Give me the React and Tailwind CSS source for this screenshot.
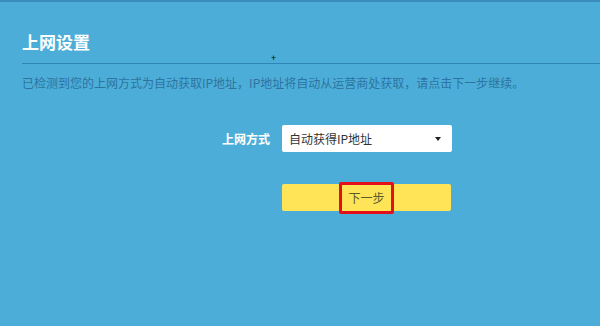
import React from "react";

const NetSetup = () => {
  return (
    <div
      className="w-full h-[326px] bg-[#4caed8] border-t-2 border-[#3a8dbb] overflow-hidden relative"
      style={{ fontFamily: '"Noto Sans CJK SC", "Noto Sans", sans-serif' }}
    >
      {/* stray mouse cursor */}
      <span className="absolute left-[271px] top-[51px] text-[9px] leading-none text-black">+</span>

      <div className="pl-[22px]">
        <h2 className="pt-[28px] text-[17px] leading-[24px] font-bold text-white">上网设置</h2>
        <div className="mt-[9px] border-t border-[#2f85b3]" />
        <p className="mt-[11px] text-[12px] leading-[16px] text-[#2c73a0]">
          已检测到您的上网方式为自动获取IP地址，IP地址将自动从运营商处获取，请点击下一步继续。
        </p>
      </div>

      <div className="flex items-center mt-[34px]">
        <div className="w-[270px] pr-[0px] text-right text-[12px] font-bold text-white">上网方式</div>
        <div className="ml-[12px] w-[170px] h-[27px] bg-white rounded-[2px] flex items-center justify-between pl-[7px] pr-[11px]">
          <span className="text-[12px] text-[#333]">自动获得IP地址</span>
          <span className="w-0 h-0 border-l-[3.5px] border-r-[3.5px] border-t-[4px] border-l-transparent border-r-transparent border-t-[#222]" />
        </div>
      </div>

      <div className="flex mt-[32px] ml-[282px]">
        <button className="w-[169px] h-[27px] bg-[#ffe457] rounded-[2px] flex items-center justify-center">
          <span className="px-[6px] py-[3px] border-[3px] border-[#e3101a] rounded-[2px] text-[12px] leading-[20px] text-[#5a5a2a]">
            下一步
          </span>
        </button>
      </div>
    </div>
  );
};

export default function App() {
  return <NetSetup />;
}
